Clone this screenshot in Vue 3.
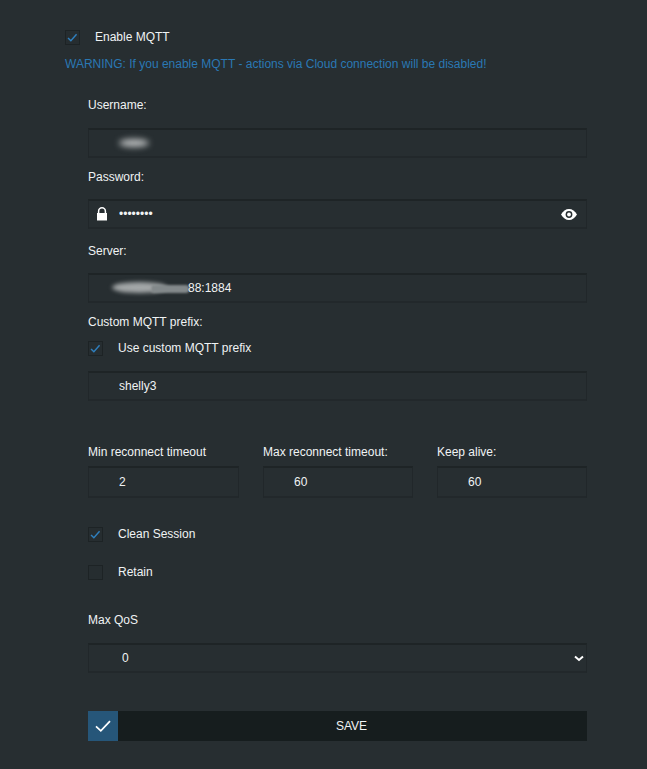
<script setup>
import { ref } from 'vue'

const enabled = ref(true)
const useCustomPrefix = ref(true)
const cleanSession = ref(true)
const retain = ref(false)
const showPassword = ref(false)

const password = ref('password')
const prefix = ref('shelly3')
const minTimeout = ref('2')
const maxTimeout = ref('60')
const keepAlive = ref('60')
const qos = ref('0')
</script>

<template>
  <div class="page">
    <label class="check top-check">
      <input v-model="enabled" type="checkbox" />
      <span class="box">
        <svg v-if="enabled" viewBox="0 0 16 16"><path d="M2.500 8.500l3.500 3.500 7-8" /></svg>
      </span>
      <span>Enable MQTT</span>
    </label>
    <p class="warning">WARNING: If you enable MQTT - actions via Cloud connection will be disabled!</p>

    <form class="fields" @submit.prevent>
      <div class="label first">Username:</div>
      <div class="field">
        <span class="smudge user-smudge"></span>
      </div>

      <div class="label pass-label">Password:</div>
      <div class="field">
        <svg class="lock" viewBox="0 0 12 14">
          <path d="M2.600 6V4.200a3.400 3.400 0 0 1 6.800 0V6" fill="none" stroke="#fff" stroke-width="1.500" />
          <rect x="1" y="6" width="10" height="7.500" fill="#fff" />
        </svg>
        <input v-model="password" class="pass-input" :type="showPassword ? 'text' : 'password'" />
        <svg class="eye" viewBox="0 0 16 11" @click="showPassword = !showPassword">
          <path d="M0 5.500C2 2 4.800 0 8 0s6 2 8 5.500C14 9 11.200 11 8 11S2 9 0 5.500z" fill="#fff" />
          <circle cx="8" cy="5.500" r="3.400" fill="#272e31" />
          <circle cx="8" cy="5.500" r="1.900" fill="#fff" />
        </svg>
      </div>

      <div class="label server-label">Server:</div>
      <div class="field">
        <span class="smudge server-smudge"></span>
        <span class="smudge server-tail"></span>
        <span class="server-end">88:1884</span>
      </div>

      <div class="label prefix-label">Custom MQTT prefix:</div>
      <label class="check prefix-check">
        <input v-model="useCustomPrefix" type="checkbox" />
        <span class="box">
          <svg v-if="useCustomPrefix" viewBox="0 0 16 16"><path d="M2.500 8.500l3.500 3.500 7-8" /></svg>
        </span>
        <span>Use custom MQTT prefix</span>
      </label>
      <div class="field">
        <input v-model="prefix" class="text-input" type="text" />
      </div>

      <div class="timeouts">
        <div class="col-min">
          <div class="label">Min reconnect timeout</div>
          <div class="field tall"><input v-model="minTimeout" class="num-input" type="text" /></div>
        </div>
        <div class="col-max">
          <div class="label">Max reconnect timeout:</div>
          <div class="field tall"><input v-model="maxTimeout" class="num-input" type="text" /></div>
        </div>
        <div class="col-keep">
          <div class="label">Keep alive:</div>
          <div class="field tall"><input v-model="keepAlive" class="num-input" type="text" /></div>
        </div>
      </div>

      <label class="check clean-check">
        <input v-model="cleanSession" type="checkbox" />
        <span class="box">
          <svg v-if="cleanSession" viewBox="0 0 16 16"><path d="M2.500 8.500l3.500 3.500 7-8" /></svg>
        </span>
        <span>Clean Session</span>
      </label>
      <label class="check retain-check">
        <input v-model="retain" type="checkbox" />
        <span class="box">
          <svg v-if="retain" viewBox="0 0 16 16"><path d="M2.500 8.500l3.500 3.500 7-8" /></svg>
        </span>
        <span>Retain</span>
      </label>

      <div class="label qos-label">Max QoS</div>
      <div class="field">
        <select v-model="qos" class="qos-select">
          <option value="0">0</option>
          <option value="1">1</option>
          <option value="2">2</option>
        </select>
        <svg class="chevron" viewBox="0 0 10 7"><path d="M1 1.500l4 3.500 4-3.500" /></svg>
      </div>

      <button class="save" type="submit">
        <span class="save-icon">
          <svg viewBox="0 0 20 16"><path d="M2 8.500l5.500 5L18 2.500" /></svg>
        </span>
        <span class="save-text">SAVE</span>
      </button>
    </form>
  </div>
</template>

<style>
html,
body {
  background: #272e31;
}
</style>

<style scoped>
.page {
  width: 647px;
  height: 769px;
  box-sizing: border-box;
  padding: 29px 60px 0 65px;
  background: #272e31;
  color: #f0f3f4;
  font-family: "Liberation Sans", Arial, sans-serif;
  font-size: 12px;
  line-height: 16px;
  overflow: hidden;
}

.check {
  display: flex;
  align-items: center;
  gap: 15px;
  height: 16px;
  cursor: pointer;
}

.check input {
  display: none;
}

.box {
  flex: none;
  width: 15px;
  height: 15px;
  box-sizing: border-box;
  background: #262d30;
  border: 1px solid #1d2325;
  display: flex;
  align-items: center;
  justify-content: center;
}

.box svg {
  width: 13px;
  height: 13px;
  fill: none;
  stroke: #2f7fbd;
  stroke-width: 1.800;
}

.warning {
  margin: 11px 0 0;
  color: #2a78b4;
}

.fields {
  padding-left: 23px;
  width: 499px;
}

.label {
  height: 16px;
  margin-top: 10px;
  margin-bottom: 15px;
}

.label.first {
  margin-top: 25px;
  margin-bottom: 15px;
}

.label.pass-label {
  margin-top: 11px;
  margin-bottom: 14px;
}

.label.server-label {
  margin-top: 14px;
  margin-bottom: 14px;
}

.field {
  position: relative;
  height: 30px;
  box-sizing: border-box;
  display: flex;
  align-items: center;
  background: #272e31;
  border: 1px solid #21272a;
  border-top: 2px solid #1e2426;
  border-bottom: 2px solid #22282b;
}

.field.tall {
  height: 32px;
}

.smudge {
  position: absolute;
  background: #b9bcbd;
  border-radius: 50%;
  filter: blur(3px);
}

.user-smudge {
  left: 30px;
  top: 9px;
  width: 30px;
  height: 8px;
}

.server-smudge {
  left: 23px;
  top: 7px;
  width: 55px;
  height: 11px;
  background: #a3a7a8;
  filter: blur(2px);
}

.server-tail {
  left: 62px;
  top: 10px;
  width: 38px;
  height: 8px;
  background: repeating-linear-gradient(90deg, #8d9293 0 2px, #70777a 2px 3px);
  border-radius: 3px;
  filter: blur(1px);
}

.server-end {
  position: absolute;
  left: 99px;
  top: 5px;
}

.lock {
  width: 12px;
  height: 14px;
  margin-left: 7px;
  flex: none;
}

.pass-input,
.text-input,
.num-input,
.qos-select {
  background: transparent;
  border: 0;
  outline: 0;
  color: #f0f3f4;
  font: inherit;
  padding: 0;
}

.pass-input {
  margin-left: 11px;
  flex: 1;
}

.eye {
  width: 16px;
  height: 11px;
  margin-right: 9px;
  flex: none;
  cursor: pointer;
}

.text-input {
  margin-left: 30px;
  flex: 1;
  min-width: 0;
}

.label.prefix-label {
  margin-top: 11px;
  margin-bottom: 10px;
}

.prefix-check {
  margin-bottom: 15px;
}

.timeouts {
  display: flex;
  margin-top: 43px;
}

.timeouts .label {
  margin-top: 0;
  margin-bottom: 6px;
}

.col-min {
  width: 151px;
  margin-right: 24px;
}

.col-max {
  width: 150px;
  margin-right: 24px;
}

.col-keep {
  width: 150px;
}

.num-input {
  margin-left: 30px;
  width: 100px;
}

.clean-check {
  margin-top: 28px;
}

.retain-check {
  margin-top: 22px;
}

.label.qos-label {
  margin-top: 32px;
  margin-bottom: 15px;
}

.qos-select {
  appearance: none;
  width: 100%;
  height: 100%;
  padding-left: 33px;
}

.qos-select option {
  background: #272e31;
}

.chevron {
  position: absolute;
  right: 2px;
  top: 10px;
  width: 10px;
  height: 7px;
  fill: none;
  stroke: #fff;
  stroke-width: 2;
  pointer-events: none;
}

.save {
  display: flex;
  width: 499px;
  height: 30px;
  margin-top: 38px;
  padding: 0;
  border: 0;
  background: #161d1e;
  color: #f0f3f4;
  font: inherit;
  cursor: pointer;
}

.save-icon {
  flex: none;
  width: 30px;
  height: 30px;
  background: #265679;
  display: flex;
  align-items: center;
  justify-content: center;
}

.save-icon svg {
  width: 18px;
  height: 14px;
  fill: none;
  stroke: #fff;
  stroke-width: 2;
}

.save-text {
  flex: 1;
  line-height: 30px;
  text-align: center;
  padding-right: 2px;
}
</style>
